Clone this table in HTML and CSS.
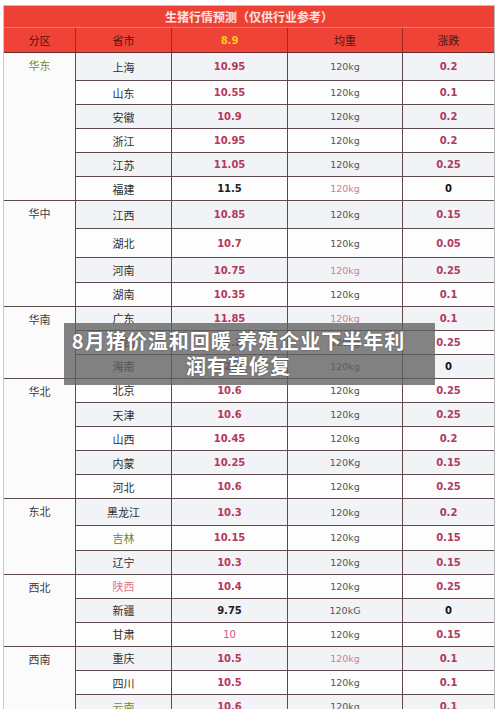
FILE: index.html
```html
<!DOCTYPE html>
<html lang="zh">
<head>
<meta charset="utf-8">
<title>8月猪价温和回暖 养殖企业下半年利润有望修复</title>
<link rel="stylesheet" href="styles.css">
</head>
<body>
<div class="page">
  <div class="sheet">
    <div class="title">生猪行情预测（仅供行业参考）</div>
    <div class="head">
      <div class="h h-region">分区</div>
      <div class="h">省市</div>
      <div class="h h-date">8.9</div>
      <div class="h">均重</div>
      <div class="h h-last">涨跌</div>
    </div>

    <div class="group">
      <div class="region green">华东</div>
      <div class="rows">
        <div class="row tall odd"><span class="prov">上海</span><span class="price">10.95</span><span class="wt">120kg</span><span class="chg">0.2</span></div>
        <div class="row"><span class="prov">山东</span><span class="price">10.55</span><span class="wt">120kg</span><span class="chg">0.1</span></div>
        <div class="row odd"><span class="prov">安徽</span><span class="price">10.9</span><span class="wt">120kg</span><span class="chg">0.2</span></div>
        <div class="row"><span class="prov">浙江</span><span class="price">10.95</span><span class="wt">120kg</span><span class="chg">0.2</span></div>
        <div class="row odd"><span class="prov">江苏</span><span class="price">11.05</span><span class="wt">120kg</span><span class="chg">0.25</span></div>
        <div class="row"><span class="prov">福建</span><span class="price black">11.5</span><span class="wt pink">120kg</span><span class="chg black">0</span></div>
      </div>
    </div>

    <div class="group">
      <div class="region">华中</div>
      <div class="rows">
        <div class="row tall odd"><span class="prov">江西</span><span class="price">10.85</span><span class="wt">120kg</span><span class="chg">0.15</span></div>
        <div class="row tall2"><span class="prov">湖北</span><span class="price">10.7</span><span class="wt">120kg</span><span class="chg">0.05</span></div>
        <div class="row odd"><span class="prov">河南</span><span class="price">10.75</span><span class="wt pink">120kg</span><span class="chg">0.25</span></div>
        <div class="row"><span class="prov">湖南</span><span class="price">10.35</span><span class="wt">120kg</span><span class="chg">0.1</span></div>
      </div>
    </div>

    <div class="group">
      <div class="region">华南</div>
      <div class="rows">
        <div class="row odd"><span class="prov">广东</span><span class="price">11.85</span><span class="wt pink">120kg</span><span class="chg">0.1</span></div>
        <div class="row"><span class="prov">广西</span><span class="price">11.2</span><span class="wt">120kg</span><span class="chg">0.25</span></div>
        <div class="row odd"><span class="prov">海南</span><span class="price">12.0</span><span class="wt">120kg</span><span class="chg black">0</span></div>
      </div>
    </div>

    <div class="group">
      <div class="region">华北</div>
      <div class="rows">
        <div class="row"><span class="prov">北京</span><span class="price">10.6</span><span class="wt">120kg</span><span class="chg">0.25</span></div>
        <div class="row odd"><span class="prov">天津</span><span class="price">10.6</span><span class="wt">120kg</span><span class="chg">0.25</span></div>
        <div class="row"><span class="prov">山西</span><span class="price">10.45</span><span class="wt">120kg</span><span class="chg">0.2</span></div>
        <div class="row odd"><span class="prov">内蒙</span><span class="price">10.25</span><span class="wt">120Kg</span><span class="chg">0.15</span></div>
        <div class="row"><span class="prov">河北</span><span class="price">10.6</span><span class="wt">120kg</span><span class="chg">0.25</span></div>
      </div>
    </div>

    <div class="group">
      <div class="region">东北</div>
      <div class="rows">
        <div class="row tall3 odd"><span class="prov">黑龙江</span><span class="price">10.3</span><span class="wt">120kg</span><span class="chg">0.2</span></div>
        <div class="row"><span class="prov green">吉林</span><span class="price">10.15</span><span class="wt">120kg</span><span class="chg">0.15</span></div>
        <div class="row odd"><span class="prov">辽宁</span><span class="price">10.3</span><span class="wt">120kg</span><span class="chg">0.15</span></div>
      </div>
    </div>

    <div class="group">
      <div class="region">西北</div>
      <div class="rows">
        <div class="row"><span class="prov pinkname">陕西</span><span class="price">10.4</span><span class="wt">120kg</span><span class="chg">0.25</span></div>
        <div class="row odd"><span class="prov">新疆</span><span class="price black">9.75</span><span class="wt">120kG</span><span class="chg black">0</span></div>
        <div class="row"><span class="prov">甘肃</span><span class="price light">10</span><span class="wt">120kg</span><span class="chg">0.15</span></div>
      </div>
    </div>

    <div class="group">
      <div class="region">西南</div>
      <div class="rows">
        <div class="row odd"><span class="prov">重庆</span><span class="price">10.5</span><span class="wt pink">120kg</span><span class="chg">0.1</span></div>
        <div class="row"><span class="prov">四川</span><span class="price">10.5</span><span class="wt">120kg</span><span class="chg">0.1</span></div>
        <div class="row odd"><span class="prov green">云南</span><span class="price">10.6</span><span class="wt">120kg</span><span class="chg">0.1</span></div>
      </div>
    </div>
  </div>

  <div class="caption">8月猪价温和回暖 养殖企业下半年利<br>润有望修复</div>
</div>
</body>
</html>
```

FILE: styles.css
```css
* { box-sizing: border-box; }

html, body {
  margin: 0;
  padding: 0;
  background: #ffffff;
  overflow: hidden;
}

.page {
  position: relative;
  width: 500px;
  height: 709px;
  padding: 5px 5px 0 3px;
  font-family: "Noto Sans CJK SC", "Noto Sans", sans-serif;
}

.sheet {
  width: 492px;
  border-left: 1px solid #c9c9c9;
  border-right: 1px solid #b9b9b9;
  border-top: 1px solid #e6b0aa;
}

.title {
  height: 22px;
  background: #ee4136;
  color: #fbe4e0;
  font-weight: bold;
  font-size: 12px;
  line-height: 21px;
  text-align: center;
  border-bottom: 1px solid #f47a70;
}

.head {
  display: grid;
  grid-template-columns: 72px 96px 116px 115px 1fr;
  height: 25px;
  background: #ef4338;
  border-bottom: 1px solid #6b2a2a;
}

.h {
  display: flex;
  align-items: center;
  justify-content: center;
  font-size: 11px;
  color: #4a1515;
  border-right: 1px solid #9a2a24;
}

.h-last { border-right: none; }

.h-date {
  color: #f8cf16;
  font-family: "DejaVu Sans", sans-serif;
  font-weight: bold;
  font-size: 10px;
}

.group {
  display: flex;
  border-bottom: 1px solid #5d4a4d;
}

.region {
  width: 72px;
  flex: none;
  border-right: 1px solid #5d4a4d;
  background: #fbfbfc;
  font-size: 11px;
  color: #3a3a3a;
  text-align: center;
  padding-top: 5px;
  line-height: 14px;
}

.region.green { color: #6f8a2a; }

.rows {
  flex: 1;
  display: flex;
  flex-direction: column;
}

.row {
  display: grid;
  grid-template-columns: 96px 116px 115px 1fr;
  height: 24.1px;
  border-bottom: 1px solid #5d4a4d;
  background: #fdfdfd;
}

.row:last-child { border-bottom: none; height: 23.1px; }
.row.odd { background: #f1f3f6; }
.row.tall { height: 28px; }
.row.tall2 { height: 29px; }
.row.tall3 { height: 27px; }

.row span {
  display: flex;
  align-items: center;
  justify-content: center;
  border-right: 1px solid #5d4a4d;
}

.row span:last-child { border-right: none; }

.prov {
  font-size: 11px;
  color: #2e2e2e;
}

.prov.green { color: #6e8a2e; }
.prov.pinkname { color: #e0788a; }

.price {
  font-family: "DejaVu Sans", sans-serif;
  font-weight: bold;
  font-size: 10px;
  color: #b8365e;
}

.price.black { color: #1e1e1e; }
.price.light { color: #d0587a; font-weight: normal; }

.wt {
  font-family: "DejaVu Sans", sans-serif;
  font-size: 9.5px;
  color: #555555;
}

.wt.pink { color: #d27c96; }

.chg {
  font-family: "DejaVu Sans", sans-serif;
  font-weight: bold;
  font-size: 10px;
  color: #b03a62;
}

.chg.black { color: #111111; }

.caption {
  position: absolute;
  left: 64px;
  top: 323px;
  width: 371px;
  height: 62px;
  padding: 5px 22px 0 0;
  background: rgba(96, 96, 96, 0.78);
  color: #ffffff;
  font-weight: bold;
  font-size: 20px;
  line-height: 25px;
  letter-spacing: 1px;
  text-align: center;
  white-space: nowrap;
  text-shadow: 0 0 2px rgba(0, 0, 0, 0.4);
}
```
